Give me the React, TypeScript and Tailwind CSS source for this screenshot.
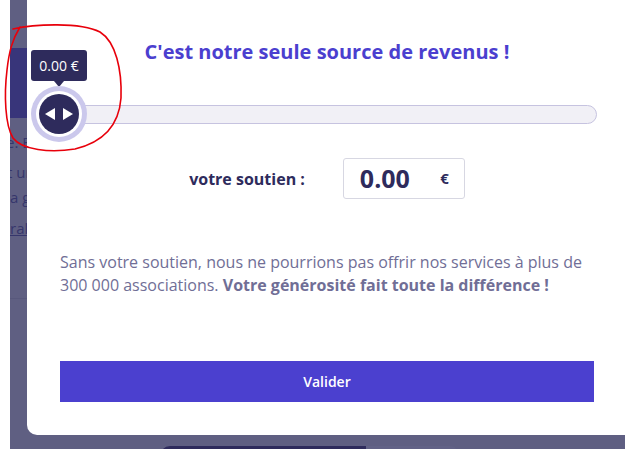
import React from 'react';

const font = { fontFamily: '"Open Sans", "Noto Sans", sans-serif' };

function Arrows() {
  return (
    <svg width="28" height="12" viewBox="0 0 28 12">
      <polygon points="0,6 10,0 10,12" fill="#fff" />
      <polygon points="28,6 18,0 18,12" fill="#fff" />
    </svg>
  );
}

function Slider() {
  return (
    <div className="relative ml-[-3px] w-[540px] h-[56px] flex items-center">
      <div className="w-full h-[19px] rounded-full bg-[#f1f0f6] border border-[#c6c3e0]" />
      {/* tooltip */}
      <div className="absolute left-[-26px] top-[-36px] w-[56px] h-[31px] rounded-[3px] bg-[#2e2b5c] text-white text-[14px] flex items-center justify-center">
        0.00 €
        <span className="absolute bottom-[-6px] left-[23px] w-0 h-0 border-l-[5px] border-r-[5px] border-t-[6px] border-l-transparent border-r-transparent border-t-[#2e2b5c]" />
      </div>
      {/* thumb */}
      <div className="absolute left-[-26px] top-0 w-[56px] h-[56px] rounded-full bg-[#cbc8ec] p-[5px]">
        <div className="w-full h-full rounded-full bg-white p-[3px]">
          <div className="w-full h-full rounded-full bg-[#2e2b5c] flex items-center justify-center">
            <Arrows />
          </div>
        </div>
      </div>
    </div>
  );
}

export default function App() {
  return (
    <div className="relative w-[625px] h-[449px] overflow-hidden bg-white flex" style={font}>
      <div className="w-[10px] shrink-0 bg-white" />
      <div className="flex-1 bg-[#5f5f82] flex flex-col overflow-hidden">
        <div className="flex h-[435px] shrink-0">
          {/* page content seen behind the overlay */}
          <div className="w-[17px] shrink-0 overflow-hidden flex flex-col text-[15px] text-[#36366c] whitespace-nowrap">
            <div className="h-[48px] shrink-0" />
            <div className="h-[70px] shrink-0 bg-[#38357a]" />
            <div className="h-[12px] shrink-0" />
            <div className="h-[24px] leading-[24px] shrink-0 ml-[-4px]">e. E</div>
            <div className="h-[6px] shrink-0" />
            <div className="h-[25px] leading-[25px] shrink-0 ml-[-3px]">t un</div>
            <div className="h-[25px] leading-[25px] shrink-0">a g</div>
            <div className="h-[6px] shrink-0" />
            <div className="h-[25px] leading-[25px] shrink-0 underline">ral</div>
            <div className="h-[57px] shrink-0" />
            <div className="border-t border-[#58587c]" />
          </div>

          {/* modal */}
          <div className="w-[600px] shrink-0 h-full bg-white rounded-bl-[10px] px-[33px] flex flex-col">
            <h2 className="mt-[40px] h-[24px] leading-[24px] text-center text-[20px] font-bold text-[#4b3fcf]">
              C'est notre seule source de revenus !
            </h2>
            <div className="mt-[22px]">
              <Slider />
            </div>
            <div className="mt-[16px] flex items-center justify-center gap-[38px]">
              <span className="text-[16px] font-bold text-[#2e2b5c]">votre soutien :</span>
              <div className="w-[122px] h-[41px] border border-[#d7d7e2] rounded-[3px] flex items-center pl-[16px] pr-[15px] justify-between">
                <span className="text-[25px] font-bold text-[#2e2b5c] leading-none">0.00</span>
                <span className="text-[15px] font-bold text-[#2e2b5c]">€</span>
              </div>
            </div>
            <p className="mt-[52px] text-[16px] leading-[23px] text-[#706e96] pr-[8px]">
              Sans votre soutien, nous ne pourrions pas offrir nos services à plus de 300 000 associations.{' '}
              <b className="font-bold">Votre générosité fait toute la différence !</b>
            </p>
            <button className="mt-[64px] w-[534px] h-[41px] bg-[#4b40cf] text-white text-[14px] font-semibold">
              Valider
            </button>
          </div>
        </div>
        <div className="pt-[11px] pl-[150px] flex">
          <div className="w-[206px] h-[10px] bg-[#2e2b5c] rounded-tl-[14px]" />
          <div className="w-[94px] h-[10px] bg-[#626286] rounded-tr-[14px]" />
        </div>
      </div>

      {/* red hand-drawn annotation */}
      <svg className="absolute left-0 top-0 pointer-events-none" width="130" height="160" viewBox="0 0 130 160">
        <path
          d="M13 29 C 35 24, 80 22, 100 32 C 116 42, 122 70, 121 98 C 119 125, 104 142, 75 149 C 50 153, 22 150, 13 138 C 5 125, 4 95, 7 70 C 9 52, 12 40, 20 27"
          fill="none"
          stroke="#e8000b"
          strokeWidth="1.6"
          strokeLinecap="round"
        />
      </svg>
    </div>
  );
}
